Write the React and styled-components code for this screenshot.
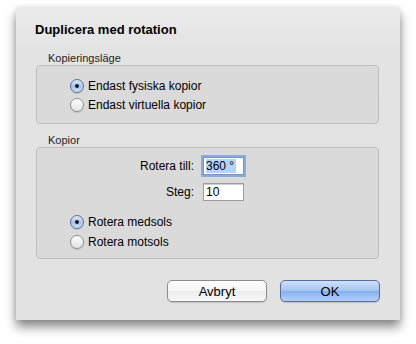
import React from "react";
import styled, { createGlobalStyle } from "styled-components";

const Global = createGlobalStyle`
  html, body {
    margin: 0;
    background: #ffffff;
  }
  body {
    font-family: "Liberation Sans", Arial, sans-serif;
    color: #000;
  }
`;

const Page = styled.div`
  width: 416px;
  height: 344px;
  padding: 8px 16px 0 16px;
  box-sizing: border-box;
`;

const Dialog = styled.div`
  width: 384px;
  height: 312px;
  box-sizing: border-box;
  background: linear-gradient(#ebebeb, #e3e3e3 40px, #e2e2e2);
  box-shadow: 0 7px 10px rgba(0, 0, 0, 0.45), 0 0 6px rgba(0, 0, 0, 0.12);
  padding: 14px 21px 0 20px;
  display: flex;
  flex-direction: column;
`;

const Title = styled.h1`
  margin: 0 0 0 -1px;
  font-size: 13px;
  font-weight: bold;
  line-height: 16px;
`;

const GroupLabel = styled.div`
  font-size: 11px;
  line-height: 13px;
  color: #222;
  margin: ${(p) => p.$top}px 0 0 12px;
`;

const GroupBox = styled.div`
  height: ${(p) => p.$height}px;
  box-sizing: border-box;
  background: #dadada;
  border: 1px solid #bdbdbd;
  border-radius: 4px;
  padding: ${(p) => p.$pad};
  display: flex;
  flex-direction: column;
`;

const RadioRow = styled.label`
  display: flex;
  align-items: center;
  gap: 4px;
  height: ${(p) => p.$h || 19}px;
  font-size: 12px;
  margin-left: 33px;
`;

const RadioDot = styled.span`
  position: relative;
  width: 14px;
  height: 14px;
  box-sizing: border-box;
  border-radius: 50%;
  border: 1px solid ${(p) => (p.$on ? "#5a6f98" : "#8e8e8e")};
  background: ${(p) =>
    p.$on
      ? "linear-gradient(#d8e6f8, #a9c6ee 55%, #cfe0f7)"
      : "linear-gradient(#ffffff, #f0f0f0 50%, #e3e3e3)"};
  box-shadow: 0 1px 1px rgba(0, 0, 0, 0.12);

  &::after {
    content: "";
    display: ${(p) => (p.$on ? "block" : "none")};
    position: absolute;
    left: 4px;
    top: 4px;
    width: 4px;
    height: 4px;
    border-radius: 50%;
    background: #1a1a1a;
  }
`;

const FieldRow = styled.div`
  display: flex;
  align-items: center;
  height: ${(p) => p.$h}px;
`;

const FieldLabel = styled.span`
  width: 166px;
  text-align: right;
  font-size: 12px;
  padding-right: 9px;
  box-sizing: border-box;
`;

const Field = styled.div`
  width: 41px;
  height: 18px;
  box-sizing: border-box;
  background: #fff;
  border: 1px solid ${(p) => (p.$focus ? "#7594c9" : "#9c9c9c")};
  box-shadow: ${(p) =>
    p.$focus ? "0 0 0 2px rgba(112, 155, 222, 0.75)" : "inset 0 1px 0 #cfcfcf"};
  font-size: 12px;
  line-height: 16px;
  padding-left: 2px;
`;

const Selected = styled.span`
  background: #b4d3fb;
  padding-right: 2px;
`;

const Spacer = styled.div`
  height: ${(p) => p.$h}px;
`;

const Buttons = styled.div`
  display: flex;
  justify-content: flex-end;
  gap: 13px;
  margin-top: 21px;
  margin-right: -1px;
`;

const Button = styled.button`
  width: 100px;
  height: 22px;
  border-radius: 5px;
  font-family: inherit;
  font-size: 13px;
  padding: 0;
  border: 1px solid ${(p) => (p.$primary ? "#5f6a9c" : "#8c8c8c")};
  background: ${(p) =>
    p.$primary
      ? "linear-gradient(#cfe1f9, #a3c4f1 50%, #86b1ec 52%, #b0d0fa)"
      : "linear-gradient(#ffffff, #f5f5f5 50%, #ececec 52%, #f8f8f8)"};
  box-shadow: 0 1px 1px rgba(0, 0, 0, 0.15);
  color: #000;
`;

const Radio = ({ on, children, h }) => (
  <RadioRow $h={h}>
    <RadioDot $on={on} />
    {children}
  </RadioRow>
);

export default function App() {
  return (
    <>
      <Global />
      <Page>
        <Dialog>
          <Title>Duplicera med rotation</Title>
          <GroupLabel $top={14}>Kopieringsläge</GroupLabel>
          <GroupBox $height={59} $pad="10px 0 0 0">
            <Radio on>Endast fysiska kopior</Radio>
            <Radio>Endast virtuella kopior</Radio>
          </GroupBox>
          <GroupLabel $top={10}>Kopior</GroupLabel>
          <GroupBox $height={112} $pad="5px 0 0 0">
            <FieldRow $h={26}>
              <FieldLabel>Rotera till:</FieldLabel>
              <Field $focus>
                <Selected>360 °</Selected>
              </Field>
            </FieldRow>
            <FieldRow $h={26}>
              <FieldLabel>Steg:</FieldLabel>
              <Field>10</Field>
            </FieldRow>
            <Spacer $h={7} />
            <Radio on h={20}>Rotera medsols</Radio>
            <Radio h={20}>Rotera motsols</Radio>
          </GroupBox>
          <Buttons>
            <Button>Avbryt</Button>
            <Button $primary>OK</Button>
          </Buttons>
        </Dialog>
      </Page>
    </>
  );
}
